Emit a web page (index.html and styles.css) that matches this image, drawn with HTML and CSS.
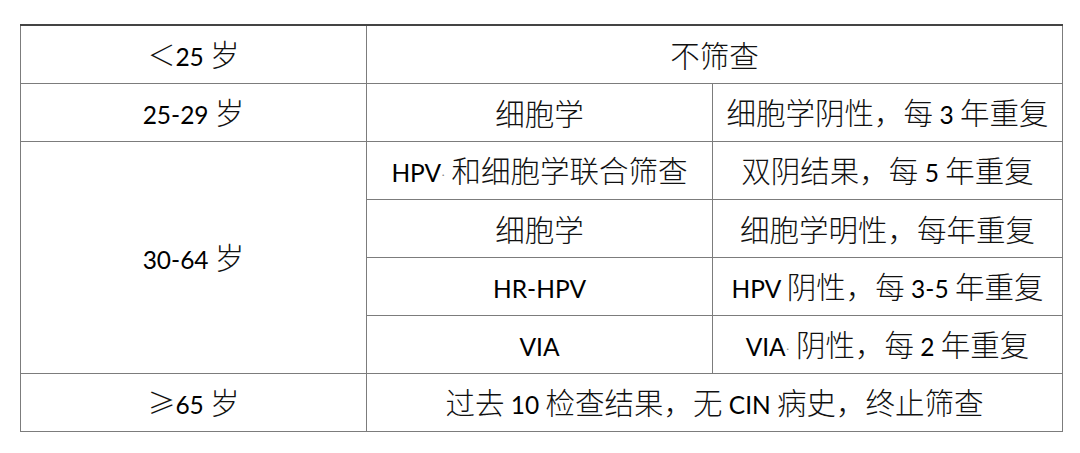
FILE: index.html
```html
<!DOCTYPE html>
<html lang="zh">
<head>
<meta charset="utf-8">
<link rel="stylesheet" href="styles.css">
</head>
<body>
<table class="grid">
  <colgroup><col class="c1"><col class="c2"><col class="c3"></colgroup>
  <tr class="first">
    <td><span class="sym">＜</span><span class="lat">25 </span>岁</td>
    <td colspan="2">不筛查</td>
  </tr>
  <tr>
    <td><span class="lat">25-29 </span>岁</td>
    <td>细胞学</td>
    <td>细胞学阴性，每<span class="lat"> 3 </span>年重复</td>
  </tr>
  <tr>
    <td rowspan="4"><span class="lat">30-64 </span>岁</td>
    <td><span class="lat">HPV</span><span class="dot">·</span> 和细胞学联合筛查</td>
    <td>双阴结果，每<span class="lat"> 5 </span>年重复</td>
  </tr>
  <tr>
    <td>细胞学</td>
    <td>细胞学明性，每年重复</td>
  </tr>
  <tr>
    <td><span class="lat">HR-HPV</span></td>
    <td><span class="lat">HPV </span>阴性，每<span class="lat"> 3-5 </span>年重复</td>
  </tr>
  <tr>
    <td><span class="lat">VIA</span></td>
    <td><span class="lat">VIA</span><span class="dot">·</span> 阴性，每<span class="lat"> 2 </span>年重复</td>
  </tr>
  <tr>
    <td><span class="sym">≥</span><span class="lat">65 </span>岁</td>
    <td colspan="2">过去<span class="lat"> 10 </span>检查结果，无<span class="lat"> CIN </span>病史，终止筛查</td>
  </tr>
</table>
</body>
</html>
```

FILE: styles.css
```css
html, body {
  margin: 0;
  padding: 0;
  background: #ffffff;
}
body {
  padding: 24px 0 0 20px;
}
.grid {
  border-collapse: collapse;
  table-layout: fixed;
  width: 1042px;
  font-family: "Noto Sans CJK SC", "Noto Sans", sans-serif;
  font-weight: 300;
  font-size: 29.5px;
  color: #111;
}
.c1 { width: 346px; }
.c2 { width: 346px; }
.c3 { width: 350px; }
.grid td {
  height: 57px;
  padding: 0;
  text-align: center;
  vertical-align: middle;
  border: 1px solid #7c7c7c;
  line-height: 1;
  white-space: nowrap;
}
.grid tr.first td {
  border-top: 2px solid #444;
}
.lat {
  font-family: "Lato", "Liberation Sans", sans-serif;
  font-weight: 400;
  font-size: 24.5px;
  color: #000;
}
.sym {
  font-weight: 300;
  font-size: 28px;
}
.dot {
  font-family: "Lato", sans-serif;
  font-size: 16px;
  color: #888;
  vertical-align: 2px;
}
```
